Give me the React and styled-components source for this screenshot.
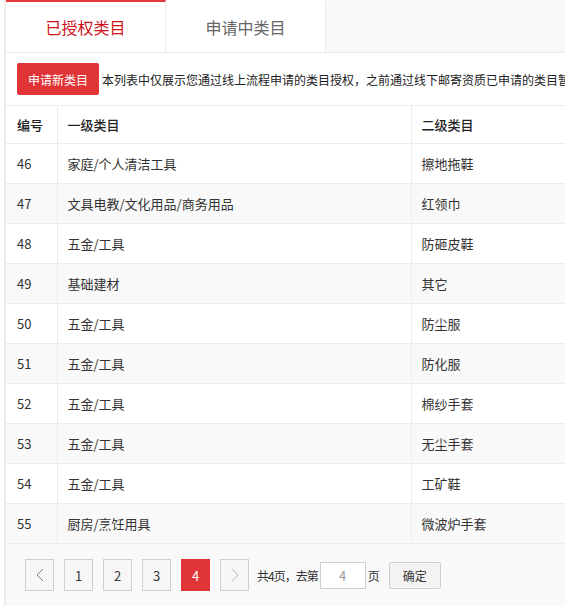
import React from 'react'
import styled, { createGlobalStyle } from 'styled-components'

const GlobalStyle = createGlobalStyle`
  html, body {
    margin: 0;
    padding: 0;
    background: #fff;
  }
  body {
    font-family: "Noto Sans CJK SC", "Microsoft YaHei", sans-serif;
    color: #333;
  }
`

const Frame = styled.div`
  width: 561px;
  height: 606px;
  margin-left: 4px;
  border-left: 2px solid #ececec;
  overflow: hidden;
  display: flex;
  flex-direction: column;
`

const TabBar = styled.div`
  display: flex;
  height: 52px;
  background: #f8f8f8;
`

const Tab = styled.div`
  width: 160px;
  box-sizing: border-box;
  display: flex;
  align-items: center;
  justify-content: center;
  background: #fff;
  border-right: 1px solid #ebebeb;
  border-top: 2px solid ${p => (p.$active ? '#e2383c' : 'transparent')};
  color: ${p => (p.$active ? '#d0121b' : '#666')};
  font-size: 16px;
  padding-bottom: 1px;
`

const Panel = styled.div`
  flex: 1;
  display: flex;
  flex-direction: column;
  border-top: 1px solid #ececec;
  background: #fff;
`

const Toolbar = styled.div`
  display: flex;
  align-items: center;
  gap: 3px;
  padding: 10px 0 10px 11px;
  white-space: nowrap;
`

const RedButton = styled.button`
  flex: none;
  width: 82px;
  height: 32px;
  border: none;
  border-radius: 2px;
  background: #e13436;
  color: #fff;
  font-family: inherit;
  font-size: 12px;
  padding: 0;
`

const Note = styled.span`
  font-size: 12px;
  color: #222;
`

const Table = styled.table`
  width: 760px;
  border-collapse: collapse;
  font-size: 13px;
  color: #333;
  border-top: 1px solid #ececec;
`

const Cell = styled.td`
  height: 40px;
  padding: 0 10px;
  border-bottom: 1px solid #ececec;
  border-right: 1px solid #ececec;
  text-align: left;
  font-weight: ${p => (p.$head ? 500 : 400)};
  color: ${p => (p.$head ? '#222' : '#333')};
  width: ${p => p.$w || 'auto'};
  box-sizing: border-box;
  &:first-child {
    padding-left: 11px;
  }
`

const HeadCell = styled(Cell).attrs({ as: 'th' })`
  height: 38px;
`

const Row = styled.tr`
  background: ${p => (p.$striped ? '#f9f9f9' : '#fff')};
`

const Pager = styled.div`
  flex: 1;
  background: #f9f9f9;
  display: flex;
  align-items: flex-start;
  padding: 15px 0 0 19px;
  font-size: 12px;
  color: #333;
`

const PageButton = styled.div`
  width: 29px;
  height: 32px;
  box-sizing: border-box;
  margin-right: 10px;
  display: flex;
  align-items: center;
  justify-content: center;
  font-size: 13px;
  border: 1px solid ${p => (p.$active ? '#e13436' : '#cfcfcf')};
  background: ${p => (p.$active ? '#e13436' : '#f7f7f7')};
  color: ${p => (p.$active ? '#fff' : '#333')};
`

const Jump = styled.div`
  display: flex;
  align-items: center;
  height: 32px;
  margin-left: -2px;
`

const JumpText = styled.span`
  letter-spacing: -1px;
`

const PageInput = styled.div`
  width: 46px;
  height: 27px;
  box-sizing: border-box;
  margin: 0 2px 0 2px;
  border: 1px solid #cfcfcf;
  background: #fff;
  color: #999;
  font-size: 13px;
  display: flex;
  align-items: center;
  justify-content: center;
`

const ConfirmButton = styled.div`
  width: 52px;
  height: 27px;
  box-sizing: border-box;
  margin-left: 9px;
  border: 1px solid #cfcfcf;
  border-radius: 2px;
  background: #f3f3f3;
  display: flex;
  align-items: center;
  justify-content: center;
  font-size: 12px;
  color: #333;
`

const Chevron = ({ dir, color }) => (
  <svg width="8" height="14" viewBox="0 0 8 14">
    <path
      d={dir === 'left' ? 'M7 1 L1 7 L7 13' : 'M1 1 L7 7 L1 13'}
      fill="none"
      stroke={color}
      strokeWidth="1"
    />
  </svg>
)

const rows = [
  [46, '家庭/个人清洁工具', '擦地拖鞋'],
  [47, '文具电教/文化用品/商务用品', '红领巾'],
  [48, '五金/工具', '防砸皮鞋'],
  [49, '基础建材', '其它'],
  [50, '五金/工具', '防尘服'],
  [51, '五金/工具', '防化服'],
  [52, '五金/工具', '棉纱手套'],
  [53, '五金/工具', '无尘手套'],
  [54, '五金/工具', '工矿鞋'],
  [55, '厨房/烹饪用具', '微波炉手套'],
]

export default function App() {
  return (
    <>
      <GlobalStyle />
      <Frame>
        <TabBar>
          <Tab $active>已授权类目</Tab>
          <Tab>申请中类目</Tab>
        </TabBar>
        <Panel>
          <Toolbar>
            <RedButton>申请新类目</RedButton>
            <Note>本列表中仅展示您通过线上流程申请的类目授权，之前通过线下邮寄资质已申请的类目暂不在此展示</Note>
          </Toolbar>
          <Table>
            <thead>
              <tr>
                <HeadCell $head $w="51px">编号</HeadCell>
                <HeadCell $head $w="354px">一级类目</HeadCell>
                <HeadCell $head>二级类目</HeadCell>
              </tr>
            </thead>
            <tbody>
              {rows.map((r, i) => (
                <Row key={r[0]} $striped={i % 2 === 1}>
                  <Cell>{r[0]}</Cell>
                  <Cell>{r[1]}</Cell>
                  <Cell>{r[2]}</Cell>
                </Row>
              ))}
            </tbody>
          </Table>
          <Pager>
            <PageButton><Chevron dir="left" color="#8a7a70" /></PageButton>
            {[1, 2, 3, 4].map(n => (
              <PageButton key={n} $active={n === 4}>{n}</PageButton>
            ))}
            <PageButton><Chevron dir="right" color="#bbb" /></PageButton>
            <Jump>
              <JumpText>共4页，去第</JumpText>
              <PageInput>4</PageInput>
              页
              <ConfirmButton>确定</ConfirmButton>
            </Jump>
          </Pager>
        </Panel>
      </Frame>
    </>
  )
}
